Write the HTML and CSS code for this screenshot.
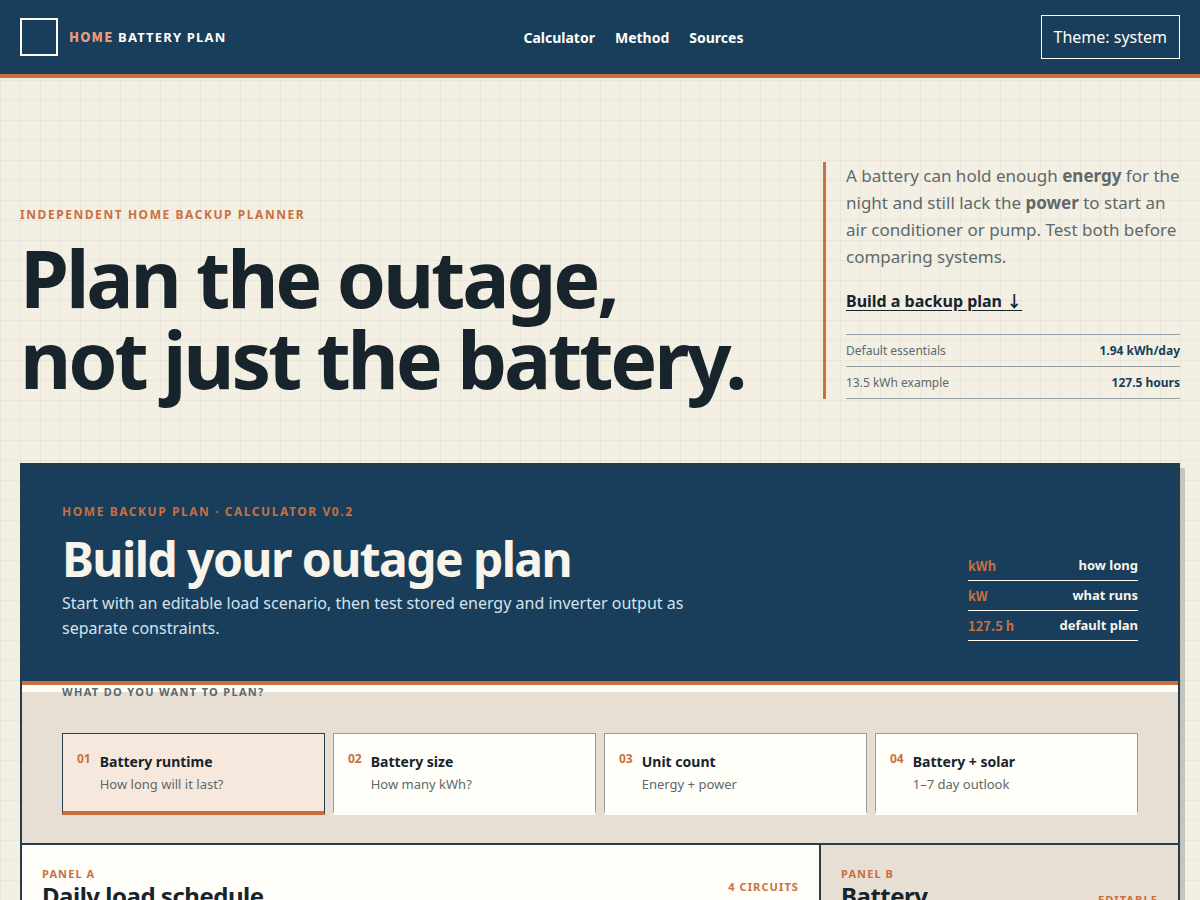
FILE: index.html
```html
<!DOCTYPE html>
<html lang="en">
<head>
    <meta charset="UTF-8">
    <meta name="viewport" content="width=device-width, initial-scale=1.0">
    <title>Home Battery Plan</title>
    <link rel="stylesheet" href="styles.css">
</head>
<body>
    <header class="site-header">
        <a class="brand" href="#top">
            <span class="brand-mark"></span>
            <span class="brand-name"><b>HOME</b> BATTERY PLAN</span>
        </a>
        <nav class="site-nav">
            <a href="#calculator">Calculator</a>
            <a href="#method">Method</a>
            <a href="#sources">Sources</a>
        </nav>
        <button class="theme-button" type="button">Theme: system</button>
    </header>

    <main class="page" id="top">
        <section class="hero">
            <div class="hero-title">
                <p class="eyebrow">Independent home backup planner</p>
                <h1>Plan the outage,<br>not just the battery.</h1>
            </div>
            <div class="hero-side">
                <p class="hero-text">A battery can hold enough <strong>energy</strong> for the night and still lack the <strong>power</strong> to start an air conditioner or pump. Test both before comparing systems.</p>
                <a class="hero-link" href="#calculator">Build a backup plan <span class="arrow">↓</span></a>
                <dl class="hero-facts">
                    <div><dt>Default essentials</dt><dd>1.94 kWh/day</dd></div>
                    <div><dt>13.5 kWh example</dt><dd>127.5 hours</dd></div>
                </dl>
            </div>
        </section>

        <section class="calculator" id="calculator">
            <div class="calc-header">
                <div>
                    <p class="eyebrow">Home backup plan · Calculator v0.2</p>
                    <h2>Build your outage plan</h2>
                    <p class="calc-intro">Start with an editable load scenario, then test stored energy and inverter output as separate constraints.</p>
                </div>
                <dl class="calc-key">
                    <div><dt>kWh</dt><dd>how long</dd></div>
                    <div><dt>kW</dt><dd>what runs</dd></div>
                    <div><dt>127.5 h</dt><dd>default plan</dd></div>
                </dl>
            </div>

            <fieldset class="modes">
                <legend>What do you want to plan?</legend>
                <div class="mode-grid">
                    <button class="mode active" type="button" aria-pressed="true">
                        <span class="mode-number">01</span>
                        <span class="mode-text"><strong>Battery runtime</strong><small>How long will it last?</small></span>
                    </button>
                    <button class="mode" type="button" aria-pressed="false">
                        <span class="mode-number">02</span>
                        <span class="mode-text"><strong>Battery size</strong><small>How many kWh?</small></span>
                    </button>
                    <button class="mode" type="button" aria-pressed="false">
                        <span class="mode-number">03</span>
                        <span class="mode-text"><strong>Unit count</strong><small>Energy + power</small></span>
                    </button>
                    <button class="mode" type="button" aria-pressed="false">
                        <span class="mode-number">04</span>
                        <span class="mode-text"><strong>Battery + solar</strong><small>1–7 day outlook</small></span>
                    </button>
                </div>
            </fieldset>

            <div class="panels">
                <section class="panel">
                    <div class="panel-heading">
                        <div>
                            <p class="panel-label">Panel A</p>
                            <h3>Daily load schedule</h3>
                        </div>
                        <span class="panel-label">4 circuits</span>
                    </div>
                </section>
                <section class="panel panel-side">
                    <div class="panel-heading">
                        <div>
                            <p class="panel-label">Panel B</p>
                            <h3>Battery<br>assumptions</h3>
                        </div>
                        <span class="panel-label">Editable</span>
                    </div>
                </section>
            </div>
        </section>
    </main>
</body>
</html>
```
FILE: styles.css
```css
:root{
    --ink: #17242b;
    --navy: #183e5c;
    --orange: #c8703f;
    --paper: #f3efe3;
    --card: #fffef9;
    --sand: #e7dfd3;
    --muted: #5d696b;
    --line: #929e9f;
    --edge: #283d4a;
}

*{
    margin: 0;
    padding: 0;
    box-sizing: border-box;
}

body{
    font-family: "Noto Sans", sans-serif;
    font-size: 16px;
    line-height: 25px;
    color: var(--ink);
    background-color: var(--paper);
    background-image: linear-gradient(rgba(24, 63, 93, 0.05) 1px, transparent 1px),
    linear-gradient(90deg, rgba(24, 63, 93, 0.05) 1px, transparent 1px);
    background-size: 20px 20px;
}

button{
    font: inherit;
    cursor: pointer;
}

/* header */
.site-header{
    display: flex;
    justify-content: space-between;
    align-items: center;
    padding: 15px 20px;
    background: var(--navy);
    border-bottom: 4px solid var(--orange);
}
.brand{
    display: flex;
    align-items: center;
    gap: 11px;
    color: #fffdf6;
    text-decoration: none;
}
.brand-mark{
    width: 38px;
    height: 38px;
    border: 2px solid #fffdf6;
}
.brand-name{
    font-size: 13px;
    font-weight: 700;
    letter-spacing: 0.09em;
}
.brand-name b{
    font-family: "Noto Sans CJK SC", sans-serif;
    color: #e79c7b;
}
.site-nav{
    display: flex;
    gap: 20px;
}
.site-nav a{
    color: #fffdf6;
    font-size: 14px;
    font-weight: 700;
    text-decoration: none;
}
.theme-button{
    height: 44px;
    padding: 0 12px;
    color: #fffdf6;
    background: transparent;
    border: 1px solid #fffdf6;
}

/* hero */
.page{
    padding: 0 20px 64px;
}
.hero{
    display: grid;
    grid-template-columns: minmax(0, 1fr) 357px;
    gap: 40px;
    align-items: end;
    padding: 84px 0 64px;
}
.eyebrow{
    color: var(--orange);
    font-size: 12px;
    line-height: 14px;
    font-weight: 700;
    letter-spacing: 0.13em;
    text-transform: uppercase;
}
h1{
    margin-top: 15px;
    font-size: 79px;
    line-height: 81px;
    letter-spacing: -0.04em;
}
.hero-side{
    padding-left: 20px;
    border-left: 3px solid var(--orange);
}
.hero-text{
    color: var(--muted);
    font-size: 17px;
    line-height: 27px;
}
.hero-link{
    display: block;
    width: fit-content;
    margin: 19px 0 20px;
    color: var(--ink);
    font-weight: 700;
    text-underline-offset: 3px;
}
.hero-link .arrow{
    font-family: "Noto Sans CJK SC", sans-serif;
    line-height: 1;
}
.hero-facts{
    border-top: 1px solid var(--line);
}
.hero-facts div{
    display: flex;
    justify-content: space-between;
    align-items: center;
    height: 32px;
    border-bottom: 1px solid var(--line);
    font-size: 12px;
}
.hero-facts dt{
    color: var(--muted);
}
.hero-facts dd{
    color: var(--navy);
    font-weight: 700;
}

/* calculator */
.calculator{
    background: var(--card);
    border: 2px solid var(--edge);
    box-shadow: 5px 5px 0 rgba(23, 36, 43, 0.2);
}
.calc-header{
    display: grid;
    grid-template-columns: minmax(0, 640px) 170px;
    justify-content: space-between;
    align-items: end;
    padding: 40px;
    color: #f8f4ea;
    background: var(--navy);
    border-bottom: 4px solid var(--orange);
}
h2{
    margin-top: 8px;
    font-size: 48px;
    line-height: 64px;
    letter-spacing: -0.033em;
}
.calc-intro{
    color: #d5e2ea;
}
.calc-key div{
    display: flex;
    justify-content: space-between;
    align-items: center;
    height: 30px;
    border-bottom: 1px solid #fffdf6;
    font-size: 13px;
    font-weight: 700;
}
.calc-key dt{
    color: var(--orange);
    font-family: "Noto Sans CJK SC", sans-serif;
}

/* mode picker */
.modes{
    padding: 28px 40px;
    background: var(--sand);
    border: 0;
    border-bottom: 2px solid var(--edge);
}
.modes legend{
    margin-bottom: 6px;
    color: var(--muted);
    font-size: 11px;
    line-height: 14px;
    font-weight: 700;
    letter-spacing: 0.12em;
    text-transform: uppercase;
}
.mode-grid{
    display: grid;
    grid-template-columns: repeat(4, minmax(0, 1fr));
    gap: 8px;
}
.mode{
    display: flex;
    gap: 9px;
    align-items: flex-start;
    padding: 17px 14px 16px;
    color: var(--ink);
    text-align: left;
    background: var(--card);
    border: 1px solid var(--line);
    border-bottom: 4px solid transparent;
}
.mode.active{
    background: #f7e8de;
    border-color: var(--edge);
    border-bottom-color: var(--orange);
}
.mode-number{
    color: var(--orange);
    font-size: 12px;
    line-height: 16px;
    font-weight: 700;
}
.mode-text strong,
.mode-text small{
    display: block;
    font-size: 14px;
    line-height: 22px;
}
.mode-text small{
    color: var(--muted);
    font-size: 13px;
}

/* panels */
.panels{
    display: grid;
    grid-template-columns: minmax(0, 1fr) 357px;
}
.panel{
    min-height: 320px;
    padding: 20px;
}
.panel-side{
    background: var(--sand);
}
.panel:first-child{
    border-right: 2px solid var(--edge);
}
.panel-heading{
    display: flex;
    justify-content: space-between;
    align-items: center;
}
.panel-label{
    color: var(--orange);
    font-size: 11px;
    line-height: 18px;
    font-weight: 700;
    letter-spacing: 0.1em;
    text-transform: uppercase;
}
h3{
    font-size: 24px;
    line-height: 26px;
    letter-spacing: -0.02em;
}
```
